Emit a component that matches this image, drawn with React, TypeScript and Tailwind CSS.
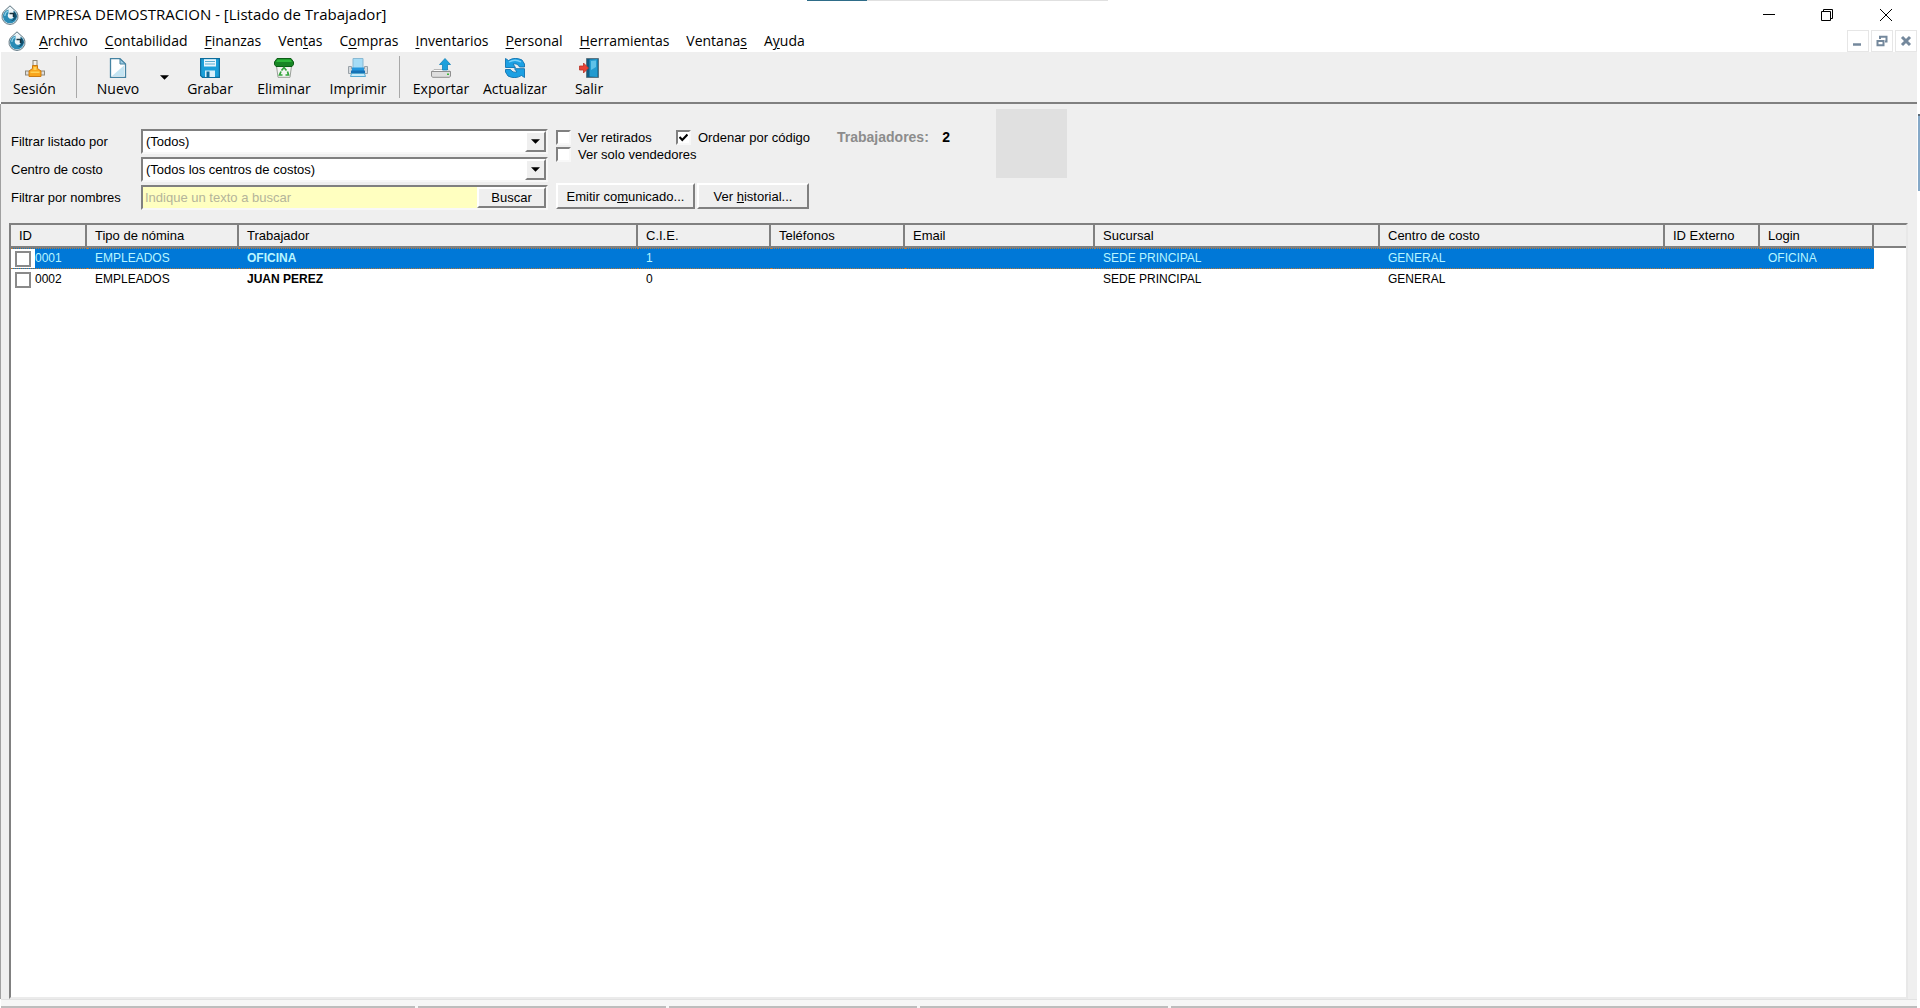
import type { ReactNode } from 'react'
import { clsx } from 'clsx'

const MENUS: [string, string, string][] = [
  ['', 'A', 'rchivo'],
  ['', 'C', 'ontabilidad'],
  ['', 'F', 'inanzas'],
  ['Ven', 't', 'as'],
  ['C', 'o', 'mpras'],
  ['', 'I', 'nventarios'],
  ['', 'P', 'ersonal'],
  ['', 'H', 'erramientas'],
  ['Ventana', 's', ''],
  ['A', 'y', 'uda'],
]

const COLUMNS = [
  { label: 'ID', width: 'w-[76px]' },
  { label: 'Tipo de nómina', width: 'w-[152px]' },
  { label: 'Trabajador', width: 'w-[399px]' },
  { label: 'C.I.E.', width: 'w-[133px]' },
  { label: 'Teléfonos', width: 'w-[134px]' },
  { label: 'Email', width: 'w-[190px]' },
  { label: 'Sucursal', width: 'w-[285px]' },
  { label: 'Centro de costo', width: 'w-[285px]' },
  { label: 'ID Externo', width: 'w-[95px]' },
  { label: 'Login', width: 'w-[114px]' },
]

const WORKERS = [
  { id: '0001', cells: ['EMPLEADOS', 'OFICINA', '1', '', '', 'SEDE PRINCIPAL', 'GENERAL', '', 'OFICINA'] },
  { id: '0002', cells: ['EMPLEADOS', 'JUAN PEREZ', '0', '', '', 'SEDE PRINCIPAL', 'GENERAL', '', ''] },
]

const SUNKEN = 'border-2 border-t-[#808080] border-l-[#808080] border-r-[#f8f8f8] border-b-[#f8f8f8]'
const RAISED = 'border-2 border-t-white border-l-white border-r-[#808080] border-b-[#808080] bg-[#efefef]'

function Logo() {
  return (
    <svg viewBox="0 0 18 20" className="h-5 w-[18px] shrink-0" aria-hidden="true">
      <path d="M9 0.800 L13 4.500 A8 8 0 1 1 5 4.500 Z" fill="#eef6f9" stroke="#4a6370" strokeWidth="0.900" />
      <path d="M7.500 4.500 A7 7 0 1 0 16 11.500 A7.500 7.500 0 0 0 12.500 5.500 L12.800 12 A3.200 3.200 0 1 1 7.500 8.500 Z" fill="#2a8bb5" />
      <path d="M12.800 6 V12.500 A4 4 0 0 1 8 16 A7 7 0 0 0 15.800 11.500 Q15.500 8.500 12.800 6" fill="#12506e" />
      <path d="M8.500 8.500 H12.500 V12" fill="none" stroke="#17333f" strokeWidth="1.500" />
      <path d="M3.800 11 Q4 7.500 7 6" stroke="#8fd0e6" strokeWidth="1.200" fill="none" />
    </svg>
  )
}

function SessionIcon() {
  return (
    <svg viewBox="0 0 20 20" className="size-5" aria-hidden="true">
      <rect x="8" y="2.500" width="4" height="6" fill="#f4f1ea" stroke="#8d8779" />
      <rect x="0.500" y="13" width="4" height="4" fill="#ddd" stroke="#8d8779" />
      <rect x="15.500" y="13" width="4" height="4" fill="#ddd" stroke="#8d8779" />
      <path d="M7.500 7.500 H12.500 V10.500 L16 13 V18.500 H4 V13 L7.500 10.500 Z" fill="#f9a51b" stroke="#c97a12" />
      <path d="M8.500 9 H11.500 V12 H8.500 Z M5.500 13.500 H14.500 V15 H5.500 Z" fill="#ffd257" />
    </svg>
  )
}

function NewIcon() {
  return (
    <svg viewBox="0 0 20 20" className="size-5" aria-hidden="true">
      <path d="M2.500 0.700 H12 L17.500 6 V19.300 H2.500 Z" fill="#fff" stroke="#4583a2" strokeWidth="1.300" />
      <path d="M4 18 L16 7.500 V18 Z" fill="#c4e4f2" />
      <path d="M12 1 V6 H17.500 Z" fill="#9ccbe2" stroke="#4583a2" />
    </svg>
  )
}

function SaveIcon() {
  return (
    <svg viewBox="0 0 20 20" className="size-5" aria-hidden="true">
      <path d="M0.600 0.600 H19.400 V19.400 H2.500 L0.600 17.500 Z" fill="#1a9fd9" stroke="#0d6c9c" strokeWidth="1.200" />
      <path d="M4 1.200 H16 V8.500 H4 Z" fill="#e9f7fd" />
      <path d="M5 3.500 H15 M5 6 H15" stroke="#5aaed0" />
      <path d="M5 12.500 H15 V19 H5 Z" fill="#d9f0fa" />
      <path d="M6.500 13.500 H9.500 V19 H6.500 Z" fill="#0d6c9c" />
    </svg>
  )
}

function TrashIcon() {
  return (
    <svg viewBox="0 0 20 20" className="size-5" aria-hidden="true">
      <path d="M2.500 8 H17.500 L16 19.300 H4 Z" fill="#f3f5f2" stroke="#9a9f99" />
      <path d="M3 0.500 H17 L19.500 4 V6.500 L18 8.500 H2 L0.500 6.500 V4 Z" fill="#178524" stroke="#0c5d16" />
      <path d="M3.500 1.500 H16.500 L18 4 H2 Z" fill="#2db73a" />
      <path d="M7.500 12.500 L10 9.500 L12.500 12.500 M13.500 13.500 L14.500 17 H11.500 M8.500 17 H5.500 L7 13.500" fill="none" stroke="#33a53c" strokeWidth="1.700" />
    </svg>
  )
}

function PrintIcon() {
  return (
    <svg viewBox="0 0 20 20" className="size-5" aria-hidden="true">
      <path d="M5 0.500 H15 V11 H5 Z" fill="#a5dcf6" stroke="#88b9d3" />
      <path d="M0.500 8.500 H3.500 V11 H16.500 V8.500 H19.500 V15.500 H0.500 Z" fill="#d5dade" stroke="#9aa2a8" />
      <path d="M4 9.500 H16 V13 H4 Z" fill="#2396dd" />
      <path d="M3 12.500 H17 V16 H3 Z" fill="#1571b5" />
      <path d="M3.500 15.500 H16.500 L17.500 18.500 H2.500 Z" fill="#c7ebfa" stroke="#55aad2" />
    </svg>
  )
}

function ExportIcon() {
  return (
    <svg viewBox="0 0 20 20" className="size-5" aria-hidden="true">
      <path d="M3 11.500 H17 L19.500 14 H0.500 Z" fill="#fafafa" stroke="#b9b9b9" />
      <path d="M0.500 13.500 H19.500 V18 L18.500 19.300 H1.500 L0.500 18 Z" fill="#dedede" stroke="#8f8f8f" />
      <path d="M16 15.500 H18 V17 H16 Z" fill="#39b739" />
      <path d="M14 0.500 L19.500 6.500 H16.500 V12 H11.500 V6.500 H8.500 Z" fill="#1ba0dd" stroke="#1382b8" strokeWidth="0.800" />
    </svg>
  )
}

function RefreshIcon() {
  return (
    <svg viewBox="0 0 20 20" className="size-5" aria-hidden="true">
      <path d="M0.500 0.500 L3.500 2.500 Q10 -1.500 17 2 L19.500 6 V9 H14.500 Q12.500 5 8 6 L10.500 9.500 H0.500 Z" fill="#1ca0e3" stroke="#0e73b0" strokeWidth="0.900" />
      <path d="M19.500 19.500 L16.500 17.500 Q10 21.500 3 18 L0.500 14 V11.500 H5.500 Q7.500 15 12 14 L9.500 10.700 H19.500 Z" fill="#1ca0e3" stroke="#0e73b0" strokeWidth="0.900" />
      <path d="M4 4 Q10 0.500 16 4" stroke="#7ad2fa" strokeWidth="1.300" fill="none" />
    </svg>
  )
}

function ExitIcon() {
  return (
    <svg viewBox="0 0 20 20" className="size-5" aria-hidden="true">
      <path d="M7.500 0.500 H19.500 V19.500 H7.500 Z" fill="#0f5c82" stroke="#5c7482" />
      <path d="M10.500 1.500 L18.500 1 V19 L10.500 18.500 Z" fill="#239bd0" />
      <path d="M12 3 L17 2.500 V9 L12 12 Z" fill="#5fc2e8" />
      <path d="M0.500 8 H4.500 V5 L9.500 10 L4.500 15 V12 H0.500 Z" fill="#ea4235" stroke="#b93227" strokeWidth="0.800" />
    </svg>
  )
}

function ToolButton({ label, icon, narrow }: { label: string; icon: ReactNode; narrow?: boolean }) {
  return (
    <button type="button" className={clsx('flex flex-col items-center pt-1.5', narrow ? 'w-[67px]' : 'w-[74px]')}>
      {icon}
      <span className="text-[14px] leading-[22px]">{label}</span>
    </button>
  )
}

function Separator() {
  return <div className="mx-1 my-1 w-px bg-[#a8a8a8]" />
}

function DownArrow() {
  return (
    <svg viewBox="0 0 8 4" className="h-[5px] w-[9px]" aria-hidden="true">
      <path d="M0 0 H8 L4 4 Z" fill="#000" />
    </svg>
  )
}

function Combo({ id, value }: { id: string; value: string }) {
  return (
    <div className={clsx('relative h-[25px] bg-white', SUNKEN)}>
      <select id={id} className="h-full w-full appearance-none bg-white pl-[3px] text-[13px] leading-[20px] outline-none">
        <option>{value}</option>
      </select>
      <span className={clsx('pointer-events-none absolute inset-y-0 right-0 flex w-[21px] items-center justify-center', RAISED)}>
        <DownArrow />
      </span>
    </div>
  )
}

function CheckOption({ label, checked }: { label: string; checked?: boolean }) {
  return (
    <label className="flex h-[17px] items-center gap-[7px]">
      <span className="relative flex size-[15px]">
        <input type="checkbox" defaultChecked={checked} className={clsx('peer size-[15px] appearance-none bg-white', SUNKEN)} />
        <svg viewBox="0 0 9 9" className="pointer-events-none absolute top-[3px] left-[3px] hidden size-[9px] peer-checked:block" aria-hidden="true">
          <path d="M0.500 4 L3.300 7 L8.500 1.500" fill="none" stroke="#000" strokeWidth="2.200" />
        </svg>
      </span>
      {label}
    </label>
  )
}

function TitleBar() {
  return (
    <header className="relative flex h-[30px] shrink-0 items-center pl-px">
      <div className="absolute top-0 left-[807px] flex h-px w-[301px] bg-[#e0e0e0]">
        <div className="w-[60px] bg-[#2e6c88]" />
      </div>
      <Logo />
      <h1 className="flex-1 pb-0.5 pl-1.5 text-[15px] leading-5">EMPRESA DEMOSTRACION - [Listado de Trabajador]</h1>
      <div className="flex h-full">
        <button type="button" aria-label="Minimizar" className="flex w-[58px] items-center justify-center">
          <svg viewBox="0 0 12 12" className="size-3" aria-hidden="true">
            <path d="M0 5.500 H12" stroke="#000" />
          </svg>
        </button>
        <button type="button" aria-label="Restaurar" className="flex w-[58px] items-center justify-center">
          <svg viewBox="0 0 12 12" className="size-3" fill="none" stroke="#000" aria-hidden="true">
            <path d="M0.500 2.500 H9.500 V11.500 H0.500 Z M2.500 2.500 V0.500 H11.500 V9.500 H9.500" />
          </svg>
        </button>
        <button type="button" aria-label="Cerrar" className="mr-1 flex w-[60px] items-center justify-center">
          <svg viewBox="0 0 12 12" className="size-3" stroke="#000" aria-hidden="true">
            <path d="M0 0 L12 12 M12 0 L0 12" />
          </svg>
        </button>
      </div>
    </header>
  )
}

function MenuBar() {
  const boxed = 'flex size-[22px] items-center justify-center border border-[#e6e6e6] bg-white'
  return (
    <div className="flex h-[22px] shrink-0 items-center">
      <nav className="flex flex-1 items-center gap-[17px] pl-2 text-[14px] leading-5">
        <span className="-mr-1">
          <Logo />
        </span>
        {MENUS.map(([before, key, after]) => (
          <button type="button" key={before + key + after}>
            {before}
            <u className="underline-offset-2">{key}</u>
            {after}
          </button>
        ))}
      </nav>
      <div className="mr-[3px] flex gap-0.5">
        <button type="button" aria-label="Minimizar ventana" className={boxed}>
          <svg viewBox="0 0 12 12" className="size-3" aria-hidden="true">
            <path d="M1 9.500 H9" stroke="#74889c" strokeWidth="2.500" />
          </svg>
        </button>
        <button type="button" aria-label="Restaurar ventana" className={boxed}>
          <svg viewBox="0 0 12 12" className="size-3" fill="none" stroke="#74889c" aria-hidden="true">
            <path d="M4 4 V1.800 H10.500 V6.500 H9" strokeWidth="2" />
            <path d="M1.500 6 H7.500 V10.300 H1.500 Z" strokeWidth="2" />
          </svg>
        </button>
        <button type="button" aria-label="Cerrar ventana" className={boxed}>
          <svg viewBox="0 0 12 12" className="size-3" aria-hidden="true">
            <path d="M2 2 L10 10 M10 2 L2 10" stroke="#74889c" strokeWidth="3" />
          </svg>
        </button>
      </div>
    </div>
  )
}

function Toolbar() {
  return (
    <div className="mr-[3px] ml-px flex h-[52px] shrink-0 border-b-2 border-[#808080] bg-[#efefef]">
      <ToolButton label="Sesión" icon={<SessionIcon />} narrow />
      <div className="ml-1 flex">
        <Separator />
      </div>
      <ToolButton label="Nuevo" icon={<NewIcon />} />
      <button type="button" aria-label="Más opciones de nuevo" className="flex w-[18px] items-center justify-center">
        <DownArrow />
      </button>
      <ToolButton label="Grabar" icon={<SaveIcon />} />
      <ToolButton label="Eliminar" icon={<TrashIcon />} />
      <ToolButton label="Imprimir" icon={<PrintIcon />} />
      <Separator />
      <ToolButton label="Exportar" icon={<ExportIcon />} />
      <ToolButton label="Actualizar" icon={<RefreshIcon />} />
      <ToolButton label="Salir" icon={<ExitIcon />} />
    </div>
  )
}

function Filters() {
  return (
    <section className="flex items-start pt-[5px] pl-2.5 text-[13px] leading-[17px]">
      <div className="mt-5 grid w-[537px] grid-cols-[130px_1fr] items-center gap-y-[3px]">
        <label htmlFor="filtro">Filtrar listado por</label>
        <Combo id="filtro" value="(Todos)" />
        <label htmlFor="centro">Centro de costo</label>
        <Combo id="centro" value="(Todos los centros de costos)" />
        <label htmlFor="nombre">Filtrar por nombres</label>
        <div className={clsx('flex h-[25px]', SUNKEN)}>
          <input
            id="nombre"
            placeholder="Indique un texto a buscar"
            className="min-w-0 flex-1 bg-[#ffffc0] pl-0.5 outline-none placeholder:text-[#b4b49a]"
          />
          <button type="button" className={clsx('w-[69px]', RAISED)}>
            Buscar
          </button>
        </div>
      </div>
      <div className="mt-5 ml-2">
        <div className="flex">
          <div className="w-[120px]">
            <CheckOption label="Ver retirados" />
          </div>
          <div className="w-[161px]">
            <CheckOption label="Ordenar por código" checked />
          </div>
          <div className="flex w-[113px] justify-between text-[14px] font-bold">
            <span className="text-[#8c8c8c]">Trabajadores:</span>
            <span>2</span>
          </div>
        </div>
        <CheckOption label="Ver solo vendedores" />
        <div className="mt-5 flex gap-0.5">
          <button type="button" className={clsx('h-[26px] w-[139px]', RAISED)}>
            Emitir co<u>m</u>unicado...
          </button>
          <button type="button" className={clsx('h-[26px] w-[112px]', RAISED)}>
            Ver <u>h</u>istorial...
          </button>
        </div>
      </div>
      <div className="ml-[46px] h-[69px] w-[71px] bg-[#e0e0e0]" />
    </section>
  )
}

function WorkerTable() {
  return (
    <div className="mt-[13px] mr-[9px] ml-2 flex-1 border-2 border-t-[#808080] border-r-[#e8e8e8] border-b-[#ebebeb] border-l-[#808080] bg-white">
      <table className="w-full table-fixed border-separate border-spacing-0 text-left">
        <thead className="text-[13px] leading-5">
          <tr>
            {COLUMNS.map((col) => (
              <th
                key={col.label}
                className={clsx('h-[23px] border-r-2 border-b-2 border-[#808080] bg-[#efefef] pt-px pb-0 pl-2 font-normal', col.width)}
              >
                {col.label}
              </th>
            ))}
            <th className="border-b-2 border-[#808080] bg-[#efefef] p-0" />
          </tr>
        </thead>
        <tbody className="text-[12px] leading-[19px]">
          {WORKERS.map((worker, i) => {
            const cell = clsx(
              'h-[21px] border-y border-dotted p-0',
              i === 0 ? 'border-[#b87a3c] bg-[#0078d7] text-[#b9f6ff]' : 'border-transparent text-black',
            )
            return (
              <tr key={worker.id}>
                <td className={cell}>
                  <label className="flex h-[19px] items-center">
                    <span className="flex h-[19px] w-6 items-center bg-white pl-1">
                      <input type="checkbox" className="size-4 appearance-none border-2 border-[#8a8a8a] bg-white" />
                    </span>
                    {worker.id}
                  </label>
                </td>
                {worker.cells.map((text, c) => (
                  <td key={c} className={clsx(cell, 'pl-2', c === 1 && 'font-bold')}>
                    {text}
                  </td>
                ))}
                <td />
              </tr>
            )
          })}
        </tbody>
      </table>
    </div>
  )
}

function StatusBar() {
  return (
    <footer className="mr-[3px] ml-px flex h-[9px] shrink-0 items-end gap-[3px] border-t border-[#e2e2e2] bg-[#f6f6f6]">
      <div className="h-0.5 w-[414px] bg-[#bdbdbd]" />
      <div className="h-0.5 w-[248px] bg-[#bdbdbd]" />
      <div className="h-0.5 w-[248px] bg-[#bdbdbd]" />
      <div className="h-0.5 w-[248px] bg-[#bdbdbd]" />
      <div className="h-0.5 flex-1 bg-[#bdbdbd]" />
    </footer>
  )
}

export default function App() {
  return (
    <div className="relative flex min-h-screen flex-col bg-white font-['Open_Sans','Noto_Sans',sans-serif] text-black">
      <TitleBar />
      <MenuBar />
      <Toolbar />
      <main className="mr-[3px] flex flex-1 flex-col border-l border-[#a0a0a0] bg-[#efefef] font-['Liberation_Sans',Arial,sans-serif]">
        <Filters />
        <WorkerTable />
      </main>
      <StatusBar />
      <div className="absolute top-[114px] right-0 h-[77px] w-0.5 border-t-2 border-[#5b6b78] bg-[#86a9c8]" />
    </div>
  )
}
